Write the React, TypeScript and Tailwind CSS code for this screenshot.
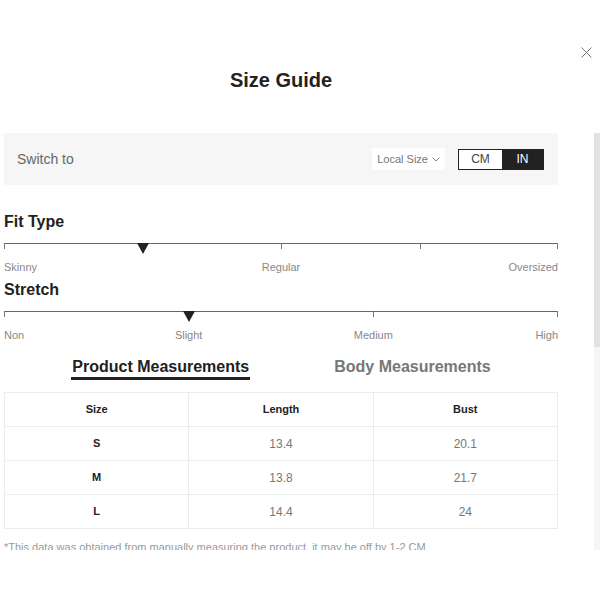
import React from "react";

type Scale = {
  ticks: number;
  pointer: number;
  labels: { text: string; at: number }[];
};

const fitScale: Scale = {
  ticks: 5,
  pointer: 0.25,
  labels: [
    { text: "Skinny", at: 0 },
    { text: "Regular", at: 0.5 },
    { text: "Oversized", at: 1 },
  ],
};

const stretchScale: Scale = {
  ticks: 4,
  pointer: 1 / 3,
  labels: [
    { text: "Non", at: 0 },
    { text: "Slight", at: 1 / 3 },
    { text: "Medium", at: 2 / 3 },
    { text: "High", at: 1 },
  ],
};

const rows = [
  { size: "S", length: "13.4", bust: "20.1" },
  { size: "M", length: "13.8", bust: "21.7" },
  { size: "L", length: "14.4", bust: "24" },
];

function ScaleBar({ scale }: { scale: Scale }) {
  const ticks = Array.from({ length: scale.ticks }, (_, i) => i / (scale.ticks - 1));
  return (
    <div className="relative h-[30px] w-full">
      {/* main line */}
      <div className="h-px w-full bg-[#666]" />
      {ticks.map((t, i) => (
        <div
          key={i}
          className="absolute top-0 h-[6px] w-px bg-[#777]"
          style={t === 1 ? { right: 0 } : { left: `${t * 100}%` }}
        />
      ))}
      {/* pointer */}
      <svg
        className="absolute top-0 -translate-x-1/2"
        style={{ left: `${scale.pointer * 100}%` }}
        width="12"
        height="11"
        viewBox="0 0 12 11"
      >
        <polygon points="0,0 12,0 6,11" fill="#222" />
      </svg>
      {scale.labels.map((l) => (
        <span
          key={l.text}
          className={`absolute top-[17px] whitespace-nowrap text-[11px] leading-[14px] text-[#888] ${
            l.at === 0 ? "left-0" : l.at === 1 ? "right-0" : "-translate-x-1/2"
          }`}
          style={l.at > 0 && l.at < 1 ? { left: `${l.at * 100}%` } : undefined}
        >
          {l.text}
        </span>
      ))}
    </div>
  );
}

export default function App() {
  return (
    <div
      className="h-[600px] w-[600px] overflow-hidden bg-white"
      style={{ fontFamily: "'Liberation Sans', Arial, sans-serif" }}
    >
      {/* Header */}
      <div className="relative h-[133px] pl-[4px]">
        <div className="w-[554px] pt-[68px] text-center text-[20px] font-bold leading-[24px] text-[#222]">
          Size Guide
        </div>
        <button className="absolute right-[8px] top-[47px] text-[#777]" aria-label="Close">
          <svg width="11" height="11" viewBox="0 0 11 11" fill="none" stroke="currentColor" strokeWidth="1">
            <path d="M0.5 0.5l10 10M10.5 0.5l-10 10" />
          </svg>
        </button>
      </div>

      {/* Scroll area */}
      <div className="flex h-[417px]">
        <div className="w-[558px] overflow-hidden pl-[4px]">
          {/* Switch bar */}
          <div className="flex h-[52px] items-center justify-between bg-[#f6f6f6] pl-[13px] pr-[14px]">
            <span className="text-[14px] text-[#666]">Switch to</span>
            <div className="flex items-center gap-[13px]">
              <div className="flex h-[22px] items-center gap-[4px] bg-white px-[5px] text-[11px] text-[#777]">
                Local Size
                <svg width="8" height="5" viewBox="0 0 8 5" fill="none" stroke="#888" strokeWidth="1">
                  <path d="M0.5 0.5L4 4l3.5-3.5" />
                </svg>
              </div>
              <div className="flex h-[21px] border border-[#222] text-[12px]">
                <span className="flex w-[43px] items-center justify-center bg-white text-[#444]">CM</span>
                <span className="flex w-[41px] items-center justify-center bg-[#222] text-white">IN</span>
              </div>
            </div>
          </div>

          {/* Fit Type */}
          <div className="mt-[27px] text-[16px] font-bold leading-[20px] text-[#222]">Fit Type</div>
          <div className="mt-[11px]">
            <ScaleBar scale={fitScale} />
          </div>

          {/* Stretch */}
          <div className="mt-[7px] text-[16px] font-bold leading-[20px] text-[#222]">Stretch</div>
          <div className="mt-[11px]">
            <ScaleBar scale={stretchScale} />
          </div>

          {/* Tabs */}
          <div className="mt-[16px] flex justify-center gap-[84px]">
            <span className="border-b-[3px] border-[#222] px-px text-[16px] font-bold leading-[20px] text-[#222]">
              Product Measurements
            </span>
            <span className="text-[16px] font-bold leading-[20px] text-[#777]">Body Measurements</span>
          </div>

          {/* Table */}
          <table className="mt-[12px] w-full border-collapse text-center">
            <thead>
              <tr className="h-[34px]">
                {["Size", "Length", "Bust"].map((h) => (
                  <th
                    key={h}
                    className="w-1/3 border border-[#ececec] text-[11px] font-bold text-[#222]"
                  >
                    {h}
                  </th>
                ))}
              </tr>
            </thead>
            <tbody>
              {rows.map((r) => (
                <tr key={r.size} className="h-[34px]">
                  <td className="border border-[#ececec] text-[11px] font-bold text-[#222]">{r.size}</td>
                  <td className="border border-[#ececec] text-[12px] text-[#777]">{r.length}</td>
                  <td className="border border-[#ececec] text-[12px] text-[#777]">{r.bust}</td>
                </tr>
              ))}
            </tbody>
          </table>

          <p className="mt-[11px] text-[11px] leading-[14px] text-[#999]">
            *This data was obtained from manually measuring the product, it may be off by 1-2 CM.
          </p>
        </div>

        {/* Scrollbar */}
        <div className="ml-[36px] flex w-[6px] flex-col bg-[#f5f5f5]">
          <div className="h-[214px] bg-[#e2e2e2]" />
        </div>
      </div>
    </div>
  );
}
